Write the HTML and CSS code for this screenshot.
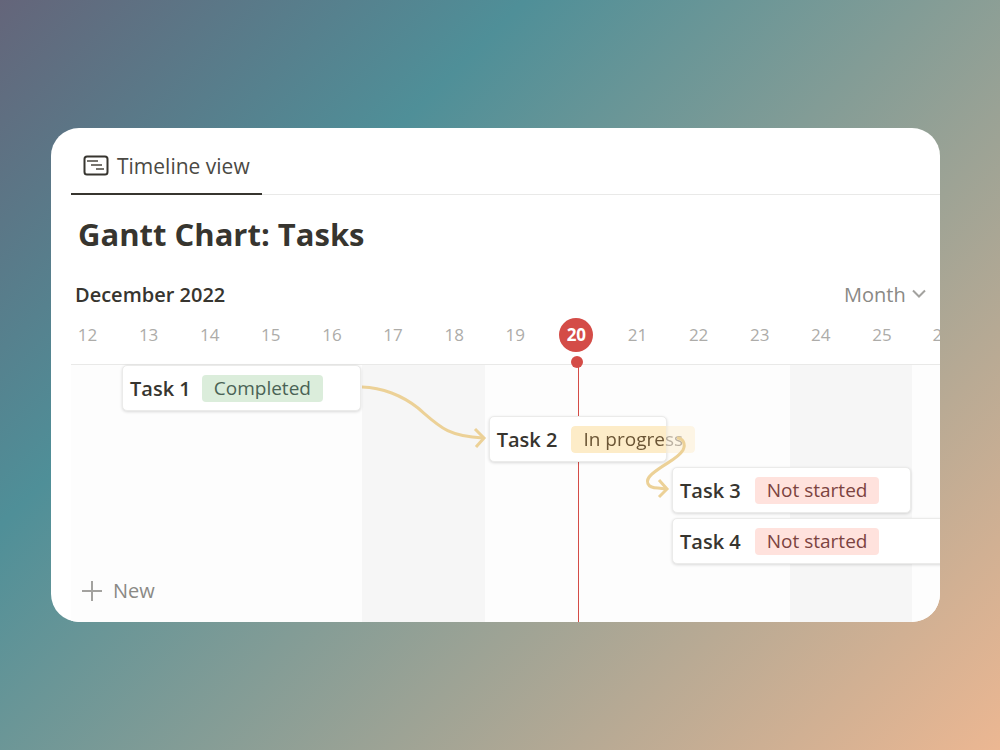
FILE: index.html
```html
<!DOCTYPE html>
<html lang="en">
<head>
    <meta charset="UTF-8">
    <meta name="viewport" content="width=device-width, initial-scale=1.0">
    <title>Gantt Chart: Tasks</title>
    <link rel="stylesheet" href="styles.css">
</head>
<body>
    <main class="card">
        <!-- View tabs -->
        <nav class="tabs">
            <button type="button" class="tab">
                <svg class="tab-icon" width="26" height="22" viewBox="0 0 26 22" fill="none" stroke="#37352f">
                    <rect x="1.5" y="1.5" width="23" height="18" rx="2.5" stroke-width="2"/>
                    <path d="M4 6h11M8 10h11M13 14h8" stroke-width="2" stroke="#77756f"/>
                </svg>
                <span>Timeline view</span>
            </button>
        </nav>

        <h1 class="title">Gantt Chart: Tasks</h1>

        <div class="toolbar">
            <h2 class="month">December 2022</h2>
            <div class="zoom">
                <select class="zoom-select" aria-label="Timeline scale">
                    <option>Month</option>
                </select>
                <svg width="14" height="10" viewBox="0 0 14 10" fill="none" stroke="#a3a29f" stroke-width="2">
                    <path d="M1 1.500l6 6 6-6"/>
                </svg>
            </div>
        </div>

        <!-- Day numbers -->
        <div class="days">
            <span class="day day-first">12</span>
            <span class="day">13</span>
            <span class="day">14</span>
            <span class="day">15</span>
            <span class="day">16</span>
            <span class="day">17</span>
            <span class="day">18</span>
            <span class="day">19</span>
            <span class="day"><b class="today">20</b></span>
            <span class="day">21</span>
            <span class="day">22</span>
            <span class="day">23</span>
            <span class="day">24</span>
            <span class="day">25</span>
            <span class="day day-last">26</span>
        </div>

        <!-- Chart -->
        <div class="chart">
            <div class="weekend weekend-1"></div>
            <div class="weekend weekend-2"></div>
            <div class="now"></div>

            <div class="task task-1">
                <span class="task-name">Task 1</span>
                <span class="badge badge-green">Completed</span>
            </div>
            <svg class="link-1" width="125" height="84" viewBox="0 0 125 84" fill="none" stroke="#ecd197" stroke-width="3">
                <path d="M-2 22C20 22 41 31 56 43C78 62 85 71 121 73"/>
                <path d="M113 64l9 9-8 9"/>
            </svg>

            <div class="task task-2">
                <span class="task-name">Task 2</span>
                <span class="badge badge-yellow">In progress</span>
            </div>

            <div class="task task-3">
                <span class="task-name">Task 3</span>
                <span class="badge badge-red">Not started</span>
                <svg class="link-2" width="50" height="76" viewBox="0 0 50 76" fill="none" stroke="#ecd197" stroke-width="3">
                    <path d="M37 13C43 13 46 19 43 25C38 34 25 38 12 49C4 56 7 63 18 63L26 64"/>
                    <path d="M19 55l8 9-8 8"/>
                </svg>
            </div>

            <div class="task task-4">
                <span class="task-name">Task 4</span>
                <span class="badge badge-red">Not started</span>
            </div>

            <button type="button" class="new">
                <svg width="20" height="20" viewBox="0 0 20 20" stroke="#a3a29f" stroke-width="2">
                    <path d="M10 0v20M0 10h20"/>
                </svg>
                <span>New</span>
            </button>
        </div>
    </main>
</body>
</html>
```

FILE: styles.css
```css
* {
  box-sizing: border-box;
}

body {
  margin: 0;
  min-height: 100vh;
  display: flex;
  padding: 128px 60px 128px 51px;
  background: linear-gradient(135deg, #64657a 0%, #4f8f98 30%, #ecb792 100%);
  font-family: "Open Sans", "Noto Sans", sans-serif;
  color: #37352f;
}

button,
select {
  font-family: inherit;
  border: none;
  background: none;
  padding: 0;
  cursor: pointer;
}

.card {
  flex: 1;
  min-width: 0;
  display: flex;
  flex-direction: column;
  padding-left: 20px;
  background: #fff;
  border-radius: 28px;
  overflow: hidden;
}

/* Tabs */
.tabs {
  display: flex;
  height: 67px;
  box-shadow: inset 0 -1px #e9e9e8;
}

.tab {
  display: flex;
  align-items: center;
  gap: 8px;
  padding: 10px 12px 0;
  border-bottom: 2px solid #37352f;
  font-size: 21px;
  font-weight: 500;
  color: #4b4944;
}

.title {
  margin: 0;
  padding: 19px 7px 0;
  font-size: 31px;
  line-height: 40px;
  font-weight: 700;
}

/* Month label and scale picker */
.toolbar {
  display: flex;
  justify-content: space-between;
  align-items: center;
  height: 32px;
  margin-top: 24px;
  padding: 0 14px 0 4px;
}

.month {
  margin: 0;
  font-size: 20px;
  font-weight: 600;
}

.zoom {
  display: flex;
  align-items: center;
  gap: 6px;
}

.zoom-select {
  appearance: none;
  font-size: 20px;
  color: #8a8985;
}

/* The header and the chart share the same day columns */
.days,
.chart {
  display: grid;
  grid-template-columns: minmax(0, 77fr) repeat(13, minmax(0, 100fr)) minmax(0, 45fr);
}

.days {
  height: 55px;
  border-bottom: 1px solid #e9e9e8;
}

.day {
  display: flex;
  justify-content: center;
  height: 49px;
  align-items: center;
  font-size: 17px;
  color: #adaca9;
}

.day-first {
  padding-right: 14px;
}

.day-last {
  justify-content: flex-start;
  padding-left: 20px;
}

.today {
  width: 34px;
  height: 34px;
  flex: none;
  border-radius: 50%;
  background: #d44c47;
  color: #fff;
  line-height: 34px;
  text-align: center;
}

/* Chart */
.chart {
  flex: 1;
  grid-template-rows: 46px 46px 46px 46px 1fr;
  row-gap: 5px;
  background: #fdfdfd;
}

.weekend {
  grid-row: 1 / 6;
  background: #f6f6f6;
}

.weekend-1 {
  grid-column: 6 / 8;
}

.weekend-2 {
  grid-column: 13 / 15;
}

/* Line that marks today */
.now {
  grid-column: 9;
  grid-row: 1 / 6;
  position: relative;
  justify-self: center;
  width: 1px;
  margin-left: 4px;
  background: #d44c47;
}

.now::before {
  content: "";
  position: absolute;
  top: -9px;
  left: -7px;
  width: 12px;
  height: 12px;
  border-radius: 50%;
  background: #d44c47;
}

.task {
  position: relative;
  display: flex;
  align-items: center;
  gap: 14px;
  margin: 0 1px 0 4px;
  padding-left: 7px;
  background: #fff;
  border: 1px solid #ebebea;
  border-radius: 5px;
  box-shadow: 0 1px 3px rgba(15, 15, 15, 0.15);
  white-space: nowrap;
}

.task-1 {
  grid-column: 2 / 6;
  grid-row: 1;
  gap: 11px;
}

.task-2 {
  grid-column: 8 / 11;
  grid-row: 2;
}

.task-3 {
  grid-column: 11 / 15;
  grid-row: 3;
}

.task-4 {
  grid-column: 11 / 16;
  grid-row: 4;
  margin-right: -8px;
}

.task-name {
  font-size: 20px;
  font-weight: 600;
}

.badge {
  flex: none;
  padding: 0 12px;
  border-radius: 4px;
  font-size: 19px;
  line-height: 27px;
}

.badge-green {
  background: #dbeddb;
  color: #4a6355;
}

/* The part that runs past the task is faded */
.badge-yellow {
  background: #fdecc8;
  color: #6b5535;
  mask-image: linear-gradient(to right, #000 95px, rgba(0, 0, 0, 0.45) 95px);
}

.badge-red {
  background: #ffe2dd;
  color: #7c4340;
}

/* Dependency arrows */
.link-1 {
  grid-column: 6 / 8;
  grid-row: 1 / 3;
}

.link-2 {
  position: absolute;
  top: -43px;
  left: -33px;
}

.new {
  grid-column: 1 / 4;
  grid-row: 5;
  align-self: end;
  justify-self: start;
  display: flex;
  align-items: center;
  gap: 11px;
  padding: 0 0 18px 11px;
  font-size: 20px;
  color: #8a8985;
}
```
